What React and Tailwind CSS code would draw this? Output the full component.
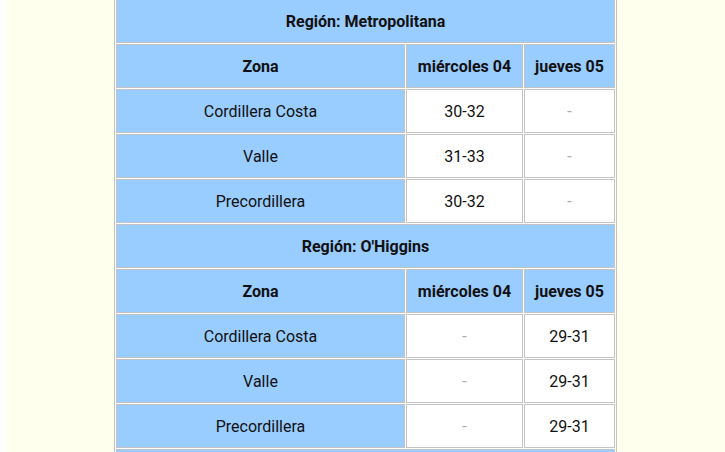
import React from "react";

const regions = [
  {
    name: "Región: Metropolitana",
    rows: [
      ["Cordillera Costa", "30-32", "-"],
      ["Valle", "31-33", "-"],
      ["Precordillera", "30-32", "-"],
    ],
  },
  {
    name: "Región: O'Higgins",
    rows: [
      ["Cordillera Costa", "-", "29-31"],
      ["Valle", "-", "29-31"],
      ["Precordillera", "-", "29-31"],
    ],
  },
];

const cellBase = "h-[44px] border border-[#c4c4c4] p-0 pt-[2px] text-center align-middle";

function Val({ v }) {
  if (v === "-") {
    return <td className={`${cellBase} bg-white text-[#aaaaaa]`}>-</td>;
  }
  return <td className={`${cellBase} bg-white text-[#111111]`}>{v}</td>;
}

export default function App() {
  return (
    <div
      className="flex h-[452px] w-[725px] overflow-hidden bg-white text-[16px] leading-6"
      style={{ fontFamily: "Roboto, 'Liberation Sans', sans-serif" }}
    >
      <div className="w-[6px] shrink-0 bg-white" />
      <div className="flex-1 bg-[#ffffee]">
        <table className="mx-auto -mt-[3px] w-[503px] table-fixed border-separate border-spacing-[1px] border border-[#c4c4c4] bg-white">
          <colgroup>
            <col className="w-[289px]" />
            <col className="w-[117px]" />
            <col className="w-[91px]" />
          </colgroup>
          <tbody>
            {regions.map((r) => (
              <React.Fragment key={r.name}>
                <tr>
                  <th
                    colSpan={3}
                    className={`${cellBase} bg-[#99ccff] font-bold text-[#111111]`}
                  >
                    {r.name}
                  </th>
                </tr>
                <tr>
                  <th className={`${cellBase} bg-[#99ccff] font-bold text-[#111111]`}>Zona</th>
                  <th className={`${cellBase} bg-[#99ccff] font-bold text-[#111111]`}>miércoles 04</th>
                  <th className={`${cellBase} bg-[#99ccff] font-bold text-[#111111]`}>jueves 05</th>
                </tr>
                {r.rows.map((row) => (
                  <tr key={r.name + row[0]}>
                    <td className={`${cellBase} bg-[#99ccff] text-[#111111]`}>{row[0]}</td>
                    <Val v={row[1]} />
                    <Val v={row[2]} />
                  </tr>
                ))}
              </React.Fragment>
            ))}
            <tr>
              <th colSpan={3} className={`${cellBase} bg-[#99ccff]`} aria-hidden="true" />
            </tr>
          </tbody>
        </table>
      </div>
    </div>
  );
}
